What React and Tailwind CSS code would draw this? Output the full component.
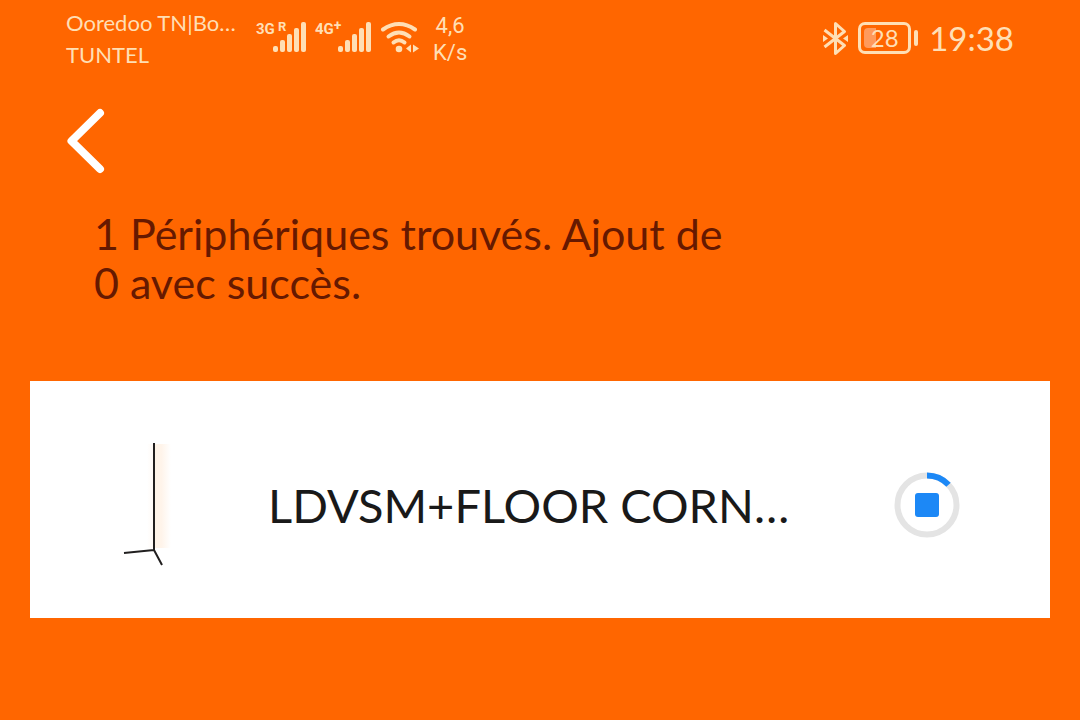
import { clsx } from "clsx";

const BARS = [
  { x: 0, h: 6 },
  { x: 7, h: 12 },
  { x: 14, h: 18 },
  { x: 21, h: 24 },
  { x: 28, h: 30 },
];

const DEVICES = [{ id: "floor-corner", name: "LDVSM+FLOOR CORN…", progress: 13 }];

function Signal({ label, suffix, wide }) {
  return (
    <div className="flex items-start">
      <div className={clsx("flex justify-between font-['Roboto',sans-serif] text-[15px] leading-4 font-bold", wide ? "w-[23px]" : "w-[17px]")}>
        <span>{label}</span>
        {suffix === "+" && <span className="text-sm leading-2">+</span>}
      </div>
      <div className="relative">
        {suffix === "R" && (
          <span className="absolute left-[5px] top-0 font-['Roboto',sans-serif] text-[13px] leading-3 font-bold">R</span>
        )}
        <svg className="h-[31px] w-[33px]" viewBox="0 0 33 31" fill="currentColor" aria-hidden="true">
          {BARS.map((b) => (
            <rect key={b.x} x={b.x} y={31 - b.h} width="5" height={b.h} rx="2" />
          ))}
        </svg>
      </div>
    </div>
  );
}

function WifiIcon() {
  return (
    <svg className="h-8 w-[39px]" viewBox="0 0 39 32" fill="none" stroke="currentColor" strokeWidth="4" strokeLinecap="round" aria-hidden="true">
      <path d="M3 8.500Q19 -2.500 35 8.500" />
      <path d="M8.500 15.500Q19 7.500 29.500 15.500" />
      <path d="M13.500 21.500Q19 17 24.500 21.500" />
      <circle cx="19" cy="28" r="3.300" fill="currentColor" stroke="none" />
      <path d="M31 23.500v8l-5-4zM33 23.500v8l6-4z" fill="currentColor" stroke="none" />
    </svg>
  );
}

function BluetoothIcon() {
  return (
    <svg className="h-[35px] w-[25px]" viewBox="0 0 25 35" fill="none" stroke="currentColor" strokeWidth="3" strokeLinejoin="round" aria-hidden="true">
      <path d="M1.500 9L21.500 24.500L12.500 32.500V2.500L21.500 10.500L1.500 26" />
      <path d="M0 14l5 3.500L0 21zM25 14l-5 3.500L25 21z" fill="currentColor" stroke="none" />
    </svg>
  );
}

function Battery({ level }) {
  return (
    <div className="flex items-center gap-[3px]">
      <div className="relative flex h-8 w-[53px] items-center justify-center rounded-[7px] border-[3px] border-[#ffdfb5]">
        <div className="absolute inset-y-[3px] left-[3px] w-3 rounded-l-sm bg-[#ff9a5c]" />
        <span className="relative text-2xl leading-6">{level}</span>
      </div>
      <div className="h-4 w-1 rounded-sm bg-[#ffdfb5]" />
    </div>
  );
}

function StatusBar() {
  return (
    <div className="flex items-start justify-between px-[66px] text-[#ffdfb5]">
      <div className="flex items-start">
        <div className="w-[190px] pt-[7px] text-[22px] leading-8 whitespace-nowrap">
          <p>Ooredoo TN|Bo…</p>
          <p>TUNTEL</p>
        </div>
        <div className="flex items-start gap-[9px] pt-[21px]">
          <Signal label="3G" suffix="R" />
          <Signal label="4G" suffix="+" wide />
          <WifiIcon />
        </div>
        <div className="ml-[14px] pt-3 text-center font-['Roboto',sans-serif] text-[22px] leading-[27px]">
          <p>4,6</p>
          <p>K/s</p>
        </div>
      </div>
      <div className="flex items-center pt-[18px]">
        <BluetoothIcon />
        <div className="ml-[10px]">
          <Battery level={28} />
        </div>
        <time className="ml-[11px] text-[33px] leading-[40px]">19:38</time>
      </div>
    </div>
  );
}

function LampPicture() {
  return (
    <svg className="h-[130px] w-[60px]" viewBox="0 0 60 130" role="img" aria-label="Lampadaire d'angle">
      <defs>
        <linearGradient id="glow">
          <stop offset="0" stopColor="#fff4e8" />
          <stop offset="0.400" stopColor="#fff4ea" />
          <stop offset="1" stopColor="#ffffff" />
        </linearGradient>
        <linearGradient id="glow-left">
          <stop offset="0" stopColor="#ffffff" />
          <stop offset="1" stopColor="#fff9f4" />
        </linearGradient>
      </defs>
      <rect x="27" y="4" width="7" height="104" fill="url(#glow-left)" />
      <rect x="35" y="4" width="16" height="104" fill="url(#glow)" />
      <path d="M34 3V111M34 110L4 113M34 110L42 125" fill="none" stroke="#211f1f" strokeWidth="2" />
    </svg>
  );
}

function StopButton({ progress }) {
  return (
    <button type="button" aria-label="Arrêter" className="shrink-0">
      <svg className="block size-[66px]" viewBox="0 0 66 66" fill="none" strokeWidth="6">
        <circle cx="33" cy="33" r="29.500" stroke="#e4e4e4" />
        <circle cx="33" cy="33" r="29.500" stroke="#1c88f6" pathLength="100" strokeDasharray={`${progress} 100`} transform="rotate(-90 33 33)" />
        <rect x="21" y="21" width="24" height="24" rx="3" fill="#1c88f6" />
      </svg>
    </button>
  );
}

export default function App() {
  return (
    <div className="min-h-screen bg-[#ff6600] font-['Lato',sans-serif]">
      <StatusBar />

      <header className="px-[66px] pt-[37px]">
        <button type="button" aria-label="Retour" className="block text-white">
          <svg className="h-[66px] w-[39px]" viewBox="0 0 39 66" fill="none" stroke="currentColor" strokeWidth="8" strokeLinecap="round" strokeLinejoin="round">
            <path d="M34 5L5.500 33L34 61" />
          </svg>
        </button>
        <h1 className="mt-[35px] ml-7 max-w-[680px] text-[43px] leading-[49px] text-[#661900]">
          1 Périphériques trouvés. Ajout de
          <br />0 avec succès.
        </h1>
      </header>

      <ul className="mx-[30px] mt-[74px]">
        {DEVICES.map((d) => (
          <li key={d.id} className="flex min-h-[237px] items-center bg-white px-[90px] pt-[10px]">
            <LampPicture />
            <span className="ml-[88px] flex-1 truncate text-[47px] leading-[60px] text-[#191919]">{d.name}</span>
            <StopButton progress={d.progress} />
          </li>
        ))}
      </ul>
    </div>
  );
}
